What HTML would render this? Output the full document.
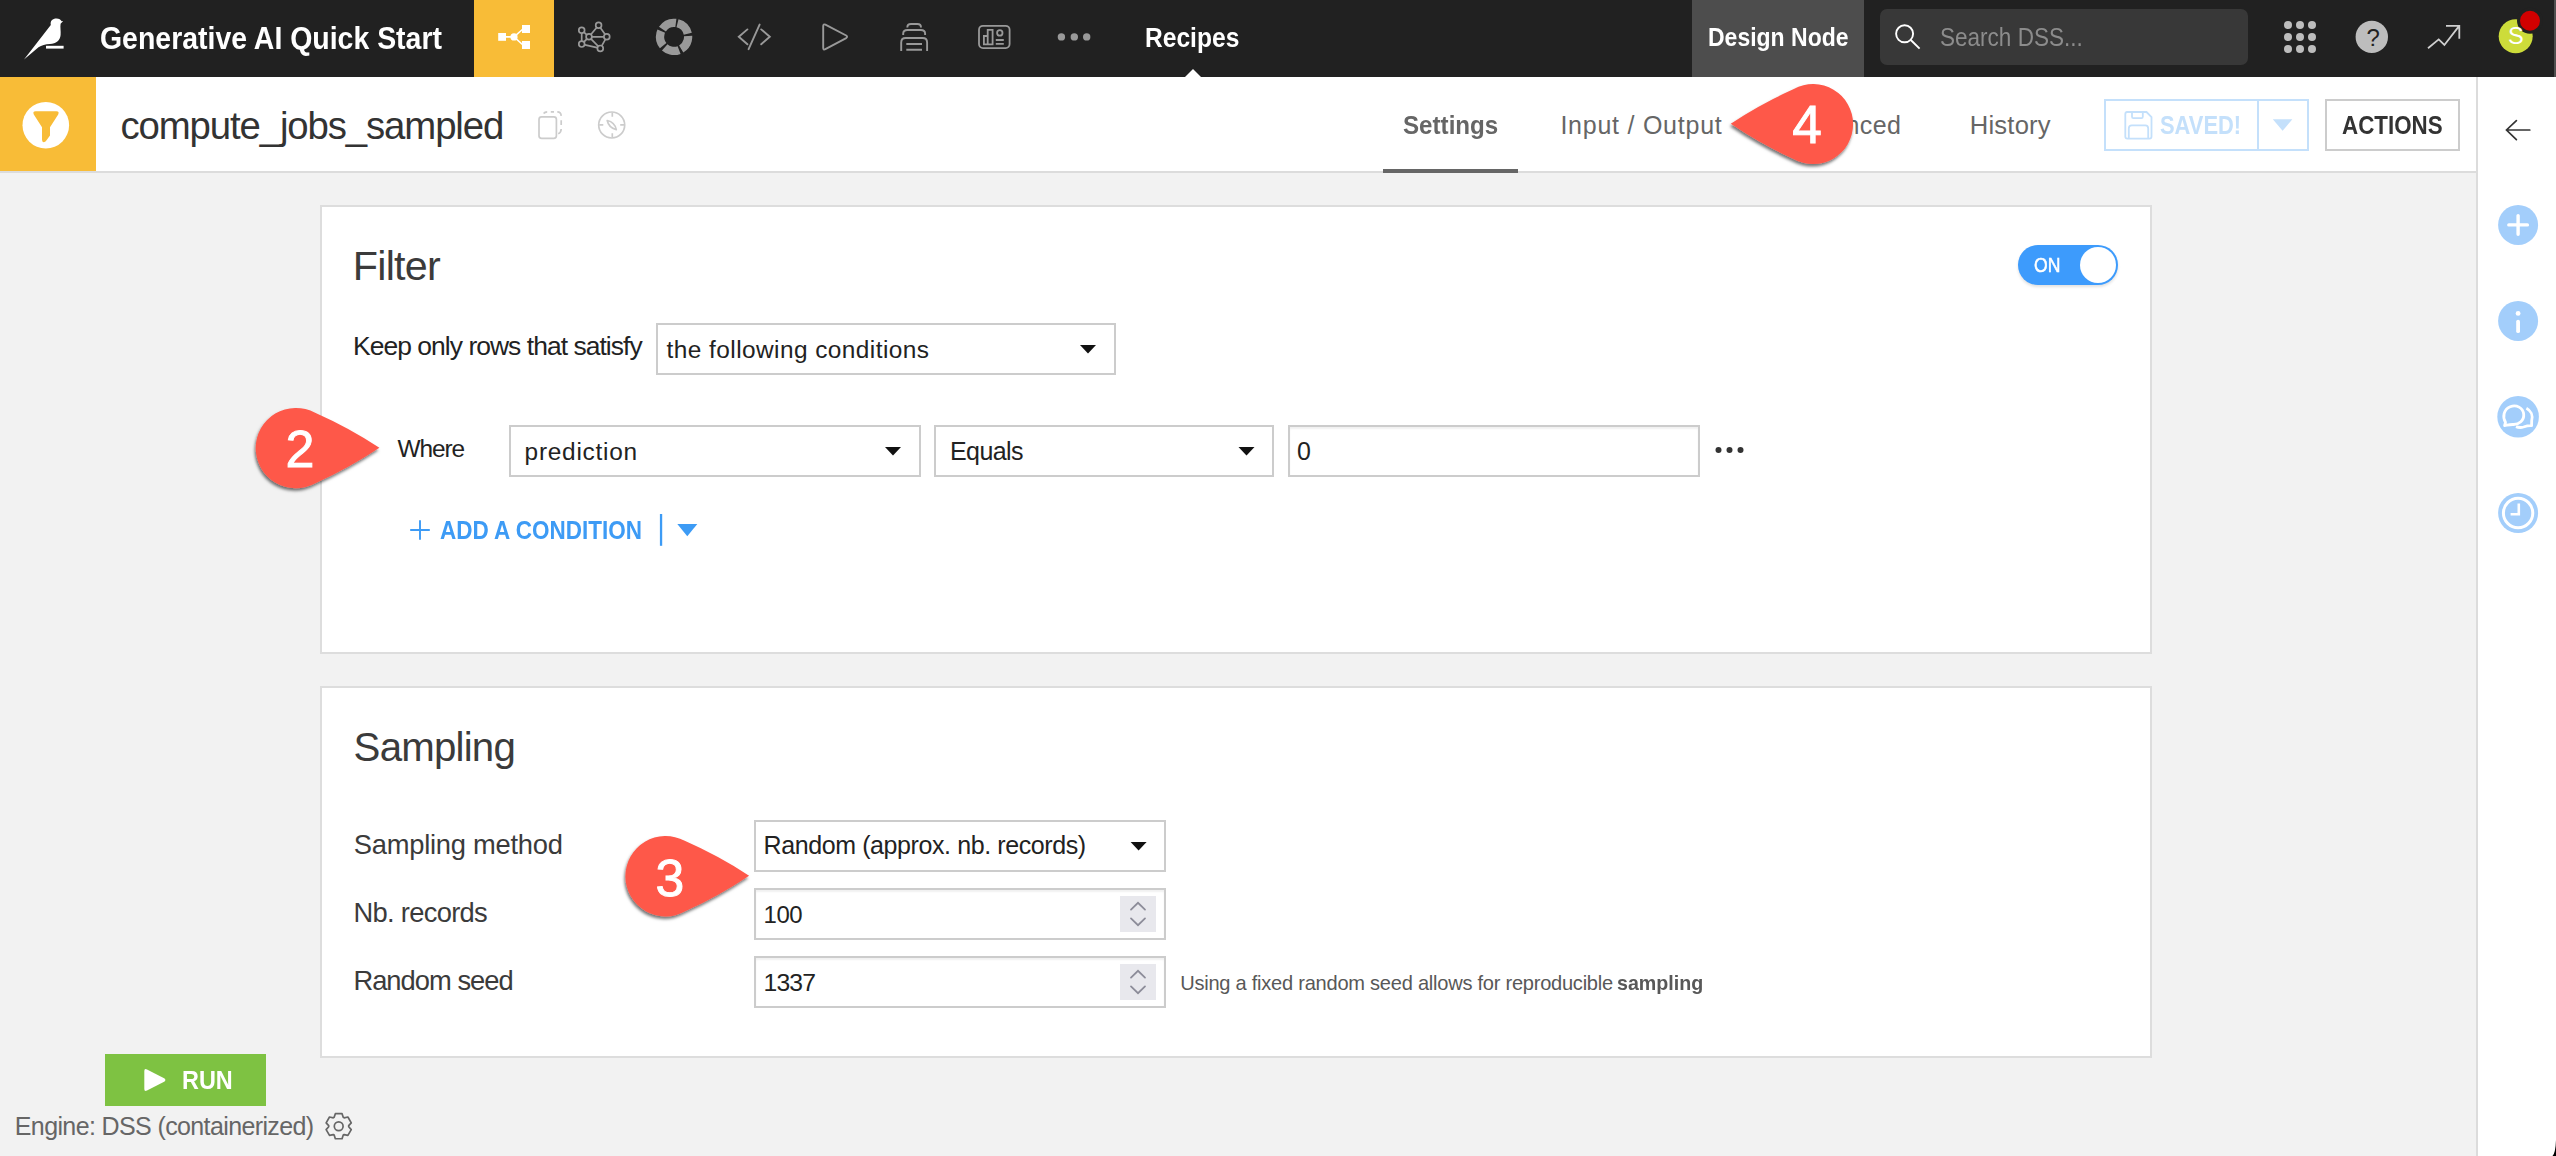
<!DOCTYPE html>
<html><head><meta charset="utf-8">
<style>
html,body{margin:0;padding:0;}
body{width:2556px;height:1156px;position:relative;overflow:hidden;background:#f2f2f2;font-family:"Liberation Sans",sans-serif;}
.a{position:absolute;box-sizing:border-box;}
.t{position:absolute;white-space:nowrap;font-family:"Liberation Sans",sans-serif;}
.n{-webkit-text-stroke:0.9px #fff;}
.on{-webkit-text-stroke:0.5px #fff;}
svg{position:absolute;left:0;top:0;}
</style></head><body>
<!-- top bar -->
<div class="a" style="left:0;top:0;width:2556px;height:77px;background:#212121"></div>
<div class="a" style="left:474px;top:0;width:80px;height:77px;background:#f8bc37"></div>
<div class="a" style="left:2554px;top:0;width:2px;height:77px;background:#4f4f4f"></div>
<div class="a" style="left:1692px;top:0;width:172px;height:77px;background:#4d4d4d"></div>
<div class="a" style="left:1880px;top:9px;width:368px;height:56px;background:#383838;border-radius:7px"></div>
<!-- header row -->
<div class="a" style="left:0;top:77px;width:2476px;height:96px;background:#ffffff;border-bottom:2px solid #dcdcdc"></div>
<div class="a" style="left:0;top:77px;width:96px;height:94px;background:#f8bc37"></div>
<div class="a" style="left:1383px;top:169px;width:135px;height:4px;background:#666666"></div>
<div class="a" style="left:2104px;top:99px;width:205px;height:52px;border:2px solid #c4e0fb"></div>
<div class="a" style="left:2257px;top:99px;width:2px;height:52px;background:#c4e0fb"></div>
<div class="a" style="left:2325px;top:99px;width:135px;height:52px;border:2px solid #cccccc"></div>
<!-- right sidebar -->
<div class="a" style="left:2476px;top:77px;width:80px;height:1080px;background:#ffffff;border-left:2px solid #dcdcdc"></div>
<!-- cards -->
<div class="a" style="left:320px;top:205px;width:1832px;height:449px;background:#fff;border:2px solid #dddddd"></div>
<div class="a" style="left:320px;top:686px;width:1832px;height:372px;background:#fff;border:2px solid #dddddd"></div>
<!-- fields -->
<div class="a" style="left:656px;top:323px;width:460px;height:52px;border:2px solid #cccccc;background:#fff"></div>
<div class="a" style="left:509px;top:425px;width:412px;height:52px;border:2px solid #cccccc;background:#fff"></div>
<div class="a" style="left:934px;top:425px;width:340px;height:52px;border:2px solid #cccccc;background:#fff"></div>
<div class="a" style="left:1288px;top:425px;width:412px;height:52px;border:2px solid #cccccc;background:#fff;box-shadow:inset 0 2px 2px rgba(0,0,0,0.06)"></div>
<div class="a" style="left:754px;top:820px;width:412px;height:52px;border:2px solid #cccccc;background:#fff"></div>
<div class="a" style="left:754px;top:888px;width:412px;height:52px;border:2px solid #cccccc;background:#fff;box-shadow:inset 0 2px 2px rgba(0,0,0,0.06)"></div>
<div class="a" style="left:754px;top:956px;width:412px;height:52px;border:2px solid #cccccc;background:#fff;box-shadow:inset 0 2px 2px rgba(0,0,0,0.06)"></div>
<div class="a" style="left:1120px;top:896px;width:36px;height:36px;background:#e8e8ed"></div>
<div class="a" style="left:1120px;top:964px;width:36px;height:36px;background:#e8e8ed"></div>
<!-- toggle -->
<div class="a" style="left:2018px;top:245px;width:100px;height:40px;border-radius:20px;background:#3d9bfc;box-shadow:0 2px 3px rgba(0,0,0,0.12)"></div>
<div class="a" style="left:2080px;top:247px;width:36px;height:36px;border-radius:18px;background:#ffffff"></div>
<!-- run -->
<div class="a" style="left:105px;top:1054px;width:161px;height:52px;background:#7ec242"></div>

<svg width="2556" height="1156" viewBox="0 0 2556 1156">
 <!-- bird logo -->
 <g fill="#fff">
  <path d="M24 59.5 L50.8 25 C50 21 52.5 18.6 56.5 18.6 C59.2 18.6 60.8 19.9 61.6 21.3 L63.2 21.1 L60.6 23.8 C60 27.5 61 31 60.6 35 C60.1 40.5 56 43.7 50 43.9 C45.5 44.1 41.5 45 38.5 47.3 Z"/>
  <rect x="46" y="45.8" width="17.6" height="2.8"/>
 </g>
 <!-- flow icon -->
 <g fill="#fff" stroke="#fff">
  <rect x="498.2" y="33" width="7.8" height="7.8" stroke="none"/>
  <rect x="522" y="25" width="8" height="8" stroke="none"/>
  <rect x="522" y="41" width="8" height="8" stroke="none"/>
  <circle cx="514" cy="36.9" r="3.6" stroke="none"/>
  <path d="M505 36.9 H512 M514 36.9 L523 29 M514 36.9 L523 45" stroke-width="1.6" fill="none"/>
 </g>
 <!-- network icon -->
 <g stroke="#999" stroke-width="1.7" fill="none">
  <path d="M581.7 30.2 L581.7 44.1 M581.7 30.2 L589 36.8 M598.6 25.2 L589 36.8 M598.6 25.2 L606.8 36.8 M589 36.8 L606.8 36.8 M589 36.8 L581.7 44.1 M589 36.8 L600.3 48.4 M581.7 44.1 L600.3 48.4 M606.8 36.8 L600.3 48.4"/>
  <g fill="#212121">
  <circle cx="581.7" cy="30.2" r="2.9"/><circle cx="598.6" cy="25.2" r="2.9"/><circle cx="589" cy="36.8" r="2.9"/>
  <circle cx="606.8" cy="36.8" r="2.9"/><circle cx="581.7" cy="44.1" r="2.9"/><circle cx="600.3" cy="48.4" r="2.9"/>
  </g>
 </g>
 <!-- donut -->
 <circle cx="674.1" cy="36.9" r="14.05" fill="none" stroke="#999" stroke-width="8.3" stroke-dasharray="15.36 2.3" transform="rotate(-76 674.1 36.9)"/>
 <!-- code -->
 <g stroke="#999" stroke-width="1.9" fill="none" stroke-linecap="round">
  <path d="M747.4 29.4 L738.8 36.8 L747.4 44.3 M761.2 29.4 L769.8 36.8 L761.2 44.3 M759.6 24.6 L748.6 49.2"/>
 </g>
 <!-- play -->
 <path d="M823.2 26 Q823.2 23.6 825.4 24.7 L846.2 35.5 Q848 36.8 846.2 38.1 L825.4 49.2 Q823.2 50.3 823.2 47.8 Z" fill="none" stroke="#999" stroke-width="1.9" stroke-linejoin="round"/>
 <!-- stack -->
 <g stroke="#999" stroke-width="1.9" fill="none">
  <path d="M907.3 27.4 Q907.3 24 911 24 H917.4 Q921 24 921 27.4"/>
  <path d="M903.2 34.9 V33.6 Q903.2 30 907.4 30 H920.9 Q925.1 30 925.1 33.6 V34.9"/>
  <path d="M901.2 51.1 V42.4 Q901.2 38 905.8 38 H922.5 Q927.1 38 927.1 42.4 V51.1"/>
  <path d="M906.3 44 H922 M906.3 49.8 H922"/>
 </g>
 <!-- dashboard -->
 <g stroke="#999" stroke-width="1.8" fill="none">
  <rect x="979" y="25.8" width="30.6" height="22.3" rx="4"/>
  <path d="M983.9 44.3 V36 H987.7 V29.8 H992.6 V44.3 Z M987.7 36 V44.3"/>
  <circle cx="999.8" cy="32.9" r="2.7"/>
  <path d="M995.8 40 H1003.8 M995.8 43.8 H1003.8"/>
 </g>
 <!-- dots -->
 <g fill="#999"><circle cx="1061.4" cy="36.9" r="3.7"/><circle cx="1074.3" cy="36.9" r="3.7"/><circle cx="1086.7" cy="36.9" r="3.7"/></g>
 <!-- recipes caret -->
 <path d="M1184.5 77.5 L1193 69.1 L1201.5 77.5 Z" fill="#fff"/>
 <!-- search icon -->
 <g stroke="#fff" stroke-width="1.9" fill="none"><circle cx="1904.6" cy="33.8" r="8.5"/><path d="M1910.8 40 L1919.6 48.6"/></g>
 <!-- grid -->
 <g fill="#bdbdbd">
  <circle cx="2288" cy="25" r="4"/><circle cx="2300" cy="25" r="4"/><circle cx="2312" cy="25" r="4"/>
  <circle cx="2288" cy="37" r="4"/><circle cx="2300" cy="37" r="4"/><circle cx="2312" cy="37" r="4"/>
  <circle cx="2288" cy="49" r="4"/><circle cx="2300" cy="49" r="4"/><circle cx="2312" cy="49" r="4"/>
 </g>
 <circle cx="2371.8" cy="36.9" r="16.2" fill="#bdbdbd"/>
 <!-- trend -->
 <g stroke="#cfcfcf" stroke-width="1.8" fill="none"><path d="M2428 48.2 L2438.7 39.4 L2444.4 45 L2459.2 25.9 M2446 25.8 H2459.3 V38.8"/></g>
 <!-- avatar -->
 <circle cx="2515.7" cy="36.3" r="17" fill="#cddc3a"/>
 <circle cx="2530" cy="20.7" r="11.5" fill="#d20000" stroke="#212121" stroke-width="3"/>

 <!-- funnel -->
 <circle cx="45.8" cy="125.2" r="23.3" fill="#fff"/>
 <path d="M35.6 111.3 H56.4 Q59.6 111.3 58.2 114.4 L50 127.2 V135.4 L45.8 141.3 Q42 143.6 42 139.6 V127.2 L33.8 114.4 Q32.4 111.3 35.6 111.3 Z" fill="#f8bc37"/>
 <!-- copy icon -->
 <g stroke="#cccccc" stroke-width="1.7" fill="none" stroke-linecap="butt">
  <rect x="539" y="116.9" width="17.4" height="21.5" rx="2.6"/>
  <path d="M543.6 113.6 Q544.8 112 547.2 111.9 M550.8 111.9 H554 M557.3 111.9 Q561 112 561.2 115.9 M561.2 120.3 V125 M561.2 129 Q561 132.8 558.2 133.7"/>
 </g>
 <!-- compass -->
 <g stroke="#cccccc" stroke-width="1.7" fill="none">
  <circle cx="611.7" cy="125" r="13"/>
  <path d="M612.3 112.6 V116.7 M612.3 133.2 V137.4 M599.2 124.9 H603.3 M620.2 124.9 H624.4"/>
  <path d="M607.2 120.5 Q614.8 122.2 616.3 129.6 Q608.8 127.8 607.2 120.5 Z" stroke-linejoin="round"/>
 </g>
 <!-- floppy -->
 <g stroke="#c4e0fb" stroke-width="1.8" fill="none">
  <path d="M2126.4 112 H2146.5 L2151.5 117 V136.5 Q2151.5 138.6 2149.5 138.6 H2127.4 Q2125.3 138.6 2125.3 136.5 V114 Q2125.3 112 2127.4 112 Z"/>
  <path d="M2132 112.2 V116.8 Q2132 118.2 2133.4 118.2 H2141.4 Q2142.8 118.2 2142.8 116.8 V112.2"/>
  <path d="M2128.8 138.4 V128.6 Q2128.8 125.4 2131.8 125.4 H2145.3 Q2148.2 125.4 2148.2 128.6 V138.4"/>
 </g>
 <path d="M2272.8 119.3 H2292.4 L2282.6 130.7 Z" fill="#c4e0fb"/>
 <!-- back arrow -->
 <g stroke="#333" stroke-width="1.7" fill="none" stroke-linecap="round"><path d="M2506.5 130 H2529.8 M2516.4 120.6 L2506.5 130 L2516.4 139.6"/></g>
 <!-- sidebar icons -->
 <g fill="#a3cefb">
  <circle cx="2518.1" cy="224.9" r="20"/>
  <circle cx="2518.1" cy="320.9" r="20"/>
  <circle cx="2518.1" cy="416.7" r="20.8"/>
  <circle cx="2518.1" cy="513" r="20"/>
 </g>
 <g stroke="#fff" stroke-linecap="round" fill="none">
  <path d="M2508.8 224.9 H2527.4 M2518.1 215.6 V234.2" stroke-width="3.4"/>
  <path d="M2518.1 321.6 V331.2" stroke-width="3.8"/>
 </g>
 <circle cx="2518.1" cy="313.4" r="2.4" fill="#fff"/>
 <g stroke="#fff" stroke-width="2.8" fill="none" stroke-linejoin="round">
  <path d="M2505.5 422.2 C2502.3 417.5 2503.5 409.4 2510.2 406.7 C2516.5 404.2 2523 407.8 2523.7 414.2 C2524.3 420.5 2519 424.8 2513 424.5 C2510 424.4 2507.8 425 2504.6 425.5 Z"/>
  <path d="M2526.4 408.2 C2531 410.5 2533 415.5 2531.7 420.5 L2531.6 425.7 C2529 425.3 2526.5 426 2523.5 427 C2520.7 427.8 2518.3 427.6 2516 426.6"/>
 </g>
 <g stroke="#fff" fill="none">
  <circle cx="2518.1" cy="513" r="14.7" stroke-width="3"/>
  <path d="M2518.8 503.4 V514.2 H2510.6" stroke-width="2.6"/>
 </g>

 <!-- add condition -->
 <g stroke="#3d9bf5" stroke-width="1.9" fill="none"><path d="M410.2 530 H429.8 M420 520.2 V539.8"/></g>
 <rect x="659.9" y="514" width="2.3" height="31.8" fill="#3d9bf5"/>
 <path d="M677.3 524 H697.3 L687.3 536.2 Z" fill="#3d9bf5"/>
 <!-- carets -->
 <g fill="#111">
  <path d="M1080 345 H1096 L1088 353.4 Z"/>
  <path d="M885 447 H901 L893 455.4 Z"/>
  <path d="M1238.5 447 H1254.5 L1246.5 455.4 Z"/>
  <path d="M1130.6 842 H1146.6 L1138.6 850.4 Z"/>
 </g>
 <!-- ... -->
 <g fill="#333"><circle cx="1718.5" cy="450" r="3"/><circle cx="1729.5" cy="450" r="3"/><circle cx="1740.5" cy="450" r="3"/></g>
 <!-- spinners -->
 <g stroke="#8c8c99" stroke-width="1.8" fill="none" stroke-linecap="round">
  <path d="M1131 909.6 L1138 902.8 L1145 909.6 M1131 918.4 L1138 925.2 L1145 918.4"/>
  <path d="M1131 977.6 L1138 970.8 L1145 977.6 M1131 986.4 L1138 993.2 L1145 986.4"/>
 </g>
 <!-- run play -->
 <path d="M144.3 1071 Q144.3 1068.2 147 1069.5 L164.6 1078.4 Q166.4 1080 164.6 1081.5 L147 1090.5 Q144.3 1091.8 144.3 1089 Z" fill="#fff"/>
 <!-- gear -->
 <g stroke="#666" stroke-width="1.7" fill="none">
  <path d="M334.16 1117.29 L335.34 1113.64 L342.06 1113.64 L343.24 1117.29 L344.15 1117.81 L347.89 1117.01 L351.26 1122.84 L348.69 1125.68 L348.69 1126.72 L351.26 1129.56 L347.89 1135.39 L344.15 1134.59 L343.24 1135.11 L342.06 1138.76 L335.34 1138.76 L334.16 1135.11 L333.25 1134.59 L329.51 1135.39 L326.14 1129.56 L328.71 1126.72 L328.71 1125.68 L326.14 1122.84 L329.51 1117.01 L333.25 1117.81 Z" stroke-linejoin="round"/>
  <circle cx="338.7" cy="1126.2" r="4.4"/>
 </g>
</svg>
<span class="t" style="left:100.08px;top:24.00px;font-size:30.96px;line-height:30.96px;font-weight:bold;color:#ffffff;transform:scaleX(0.9188);transform-origin:0 0">Generative AI Quick Start</span>
<span class="t" style="left:1145.13px;top:24.00px;font-size:27.76px;line-height:27.76px;font-weight:bold;color:#ffffff;transform:scaleX(0.8862);transform-origin:0 0">Recipes</span>
<span class="t" style="left:1707.71px;top:25.00px;font-size:25.44px;line-height:25.44px;font-weight:bold;color:#ffffff;transform:scaleX(0.9040);transform-origin:0 0">Design Node</span>
<span class="t" style="left:1940.12px;top:25.00px;font-size:25.58px;line-height:25.58px;font-weight:normal;color:#8c8c8c;transform:scaleX(0.8808);transform-origin:0 0">Search DSS...</span>
<span class="t" style="left:120.40px;top:107.00px;font-size:38.37px;line-height:38.37px;font-weight:normal;color:#333333;letter-spacing:-1.117px">compute_jobs_sampled</span>
<span class="t" style="left:1403.20px;top:113.00px;font-size:25.00px;line-height:25.00px;font-weight:bold;color:#666666;transform:scaleX(0.9662);transform-origin:0 0">Settings</span>
<span class="t" style="left:1560.40px;top:113.00px;font-size:25.00px;line-height:25.00px;font-weight:normal;color:#666666;letter-spacing:0.758px">Input / Output</span>
<span class="t" style="left:1787.00px;top:113.00px;font-size:25.00px;line-height:25.00px;font-weight:normal;color:#666666;letter-spacing:0.387px">Advanced</span>
<span class="t" style="left:1969.80px;top:113.00px;font-size:25.58px;line-height:25.58px;font-weight:normal;color:#666666;letter-spacing:0.201px">History</span>
<span class="t" style="left:2160.20px;top:113.00px;font-size:25.58px;line-height:25.58px;font-weight:bold;color:#c4e0fb;transform:scaleX(0.8566);transform-origin:0 0">SAVED!</span>
<span class="t" style="left:2341.80px;top:113.00px;font-size:25.15px;line-height:25.15px;font-weight:bold;color:#333333;transform:scaleX(0.8888);transform-origin:0 0">ACTIONS</span>
<span class="t" style="left:352.80px;top:246.00px;font-size:41.28px;line-height:41.28px;font-weight:normal;color:#3b3b3b;letter-spacing:-0.751px">Filter</span>
<span class="t on" style="left:2034.20px;top:255.00px;font-size:20.06px;line-height:20.06px;font-weight:normal;color:#ffffff;transform:scaleX(0.8766);transform-origin:0 0">ON</span>
<span class="t" style="left:353.00px;top:333.00px;font-size:26.45px;line-height:26.45px;font-weight:normal;color:#222222;letter-spacing:-0.955px">Keep only rows that satisfy</span>
<span class="t" style="left:666.60px;top:338.00px;font-size:24.42px;line-height:24.42px;font-weight:normal;color:#222222;letter-spacing:0.437px">the following conditions</span>
<span class="t" style="left:397.40px;top:437.00px;font-size:24.42px;line-height:24.42px;font-weight:normal;color:#222222;letter-spacing:-1.028px">Where</span>
<span class="t" style="left:524.60px;top:440.00px;font-size:24.42px;line-height:24.42px;font-weight:normal;color:#222222;letter-spacing:0.750px">prediction</span>
<span class="t" style="left:950.00px;top:439.00px;font-size:25.00px;line-height:25.00px;font-weight:normal;color:#222222;letter-spacing:-0.588px">Equals</span>
<span class="t" style="left:1297.00px;top:439.00px;font-size:25.00px;line-height:25.00px;font-weight:normal;color:#222222;letter-spacing:0.000px">0</span>
<span class="t" style="left:440.40px;top:518.00px;font-size:25.29px;line-height:25.29px;font-weight:bold;color:#3d9bf5;transform:scaleX(0.8892);transform-origin:0 0">ADD A CONDITION</span>
<span class="t" style="left:353.60px;top:728.00px;font-size:40.26px;line-height:40.26px;font-weight:normal;color:#3b3b3b;letter-spacing:-0.802px">Sampling</span>
<span class="t" style="left:353.80px;top:831.00px;font-size:27.33px;line-height:27.33px;font-weight:normal;color:#3b3b3b;letter-spacing:-0.254px">Sampling method</span>
<span class="t" style="left:353.40px;top:899.00px;font-size:27.33px;line-height:27.33px;font-weight:normal;color:#3b3b3b;letter-spacing:-0.691px">Nb. records</span>
<span class="t" style="left:353.40px;top:967.00px;font-size:27.33px;line-height:27.33px;font-weight:normal;color:#3b3b3b;letter-spacing:-0.986px">Random seed</span>
<span class="t" style="left:763.60px;top:833.00px;font-size:25.00px;line-height:25.00px;font-weight:normal;color:#222222;letter-spacing:-0.406px">Random (approx. nb. records)</span>
<span class="t" style="left:763.60px;top:903.00px;font-size:23.98px;line-height:23.98px;font-weight:normal;color:#222222;letter-spacing:-0.530px">100</span>
<span class="t" style="left:763.60px;top:971.00px;font-size:24.71px;line-height:24.71px;font-weight:normal;color:#222222;letter-spacing:-0.863px">1337</span>
<span class="t" style="left:1180.20px;top:973.00px;font-size:20.06px;line-height:20.06px;font-weight:normal;color:#585858;letter-spacing:-0.243px">Using a fixed random seed allows for reproducible</span>
<span class="t" style="left:1616.60px;top:973.00px;font-size:20.06px;line-height:20.06px;font-weight:bold;color:#585858;transform:scaleX(0.9800);transform-origin:0 0">sampling</span>
<span class="t" style="left:181.74px;top:1067.00px;font-size:26.16px;line-height:26.16px;font-weight:bold;color:#ffffff;transform:scaleX(0.8957);transform-origin:0 0">RUN</span>
<span class="t" style="left:14.80px;top:1114.00px;font-size:25.00px;line-height:25.00px;font-weight:normal;color:#666666;letter-spacing:-0.620px">Engine: DSS (containerized)</span>
<span class="t" style="left:2366.60px;top:26.00px;font-size:23.98px;line-height:23.98px;font-weight:normal;color:#222222;letter-spacing:0.000px">?</span>
<span class="t" style="left:2508.00px;top:25.00px;font-size:23.55px;line-height:23.55px;font-weight:normal;color:#ffffff;letter-spacing:0.000px">S</span>
<svg width="2556" height="1156" viewBox="0 0 2556 1156">
 <defs>
  <filter id="sh" x="-20%" y="-20%" width="140%" height="140%">
   <feDropShadow dx="-1" dy="2.5" stdDeviation="1.8" flood-color="#000" flood-opacity="0.55"/>
  </filter>
 </defs>
 <path d="M2556 1140 Q2555.5 1153 2552.5 1156 H2556 Z" fill="#000"/>
 <g fill="#fe584a" filter="url(#sh)">
  <path d="M379.40 447.80 Q348.84 468.16 315.38 483.26 A40.2 40.2 0 1 1 315.13 412.80 Q348.70 427.66 379.40 447.80 Z"/>
  <path d="M749.10 875.70 Q718.59 896.13 685.16 911.32 A40.2 40.2 0 1 1 684.74 840.85 Q718.35 855.64 749.10 875.70 Z"/>
  <path d="M1730.80 123.70 Q1760.87 103.75 1793.83 89.05 A40 40 0 1 1 1793.49 158.96 Q1760.67 143.95 1730.80 123.70 Z"/>
 </g>
</svg>
<span class="t n" style="left:285.40px;top:423.00px;font-size:52.04px;line-height:52.04px;font-weight:normal;color:#ffffff;letter-spacing:0.000px">2</span>
<span class="t n" style="left:655.60px;top:853.00px;font-size:51.75px;line-height:51.75px;font-weight:normal;color:#ffffff;letter-spacing:0.000px">3</span>
<span class="t n" style="left:1792.20px;top:98.00px;font-size:53.20px;line-height:53.20px;font-weight:normal;color:#ffffff;letter-spacing:0.000px">4</span>
</body></html>
